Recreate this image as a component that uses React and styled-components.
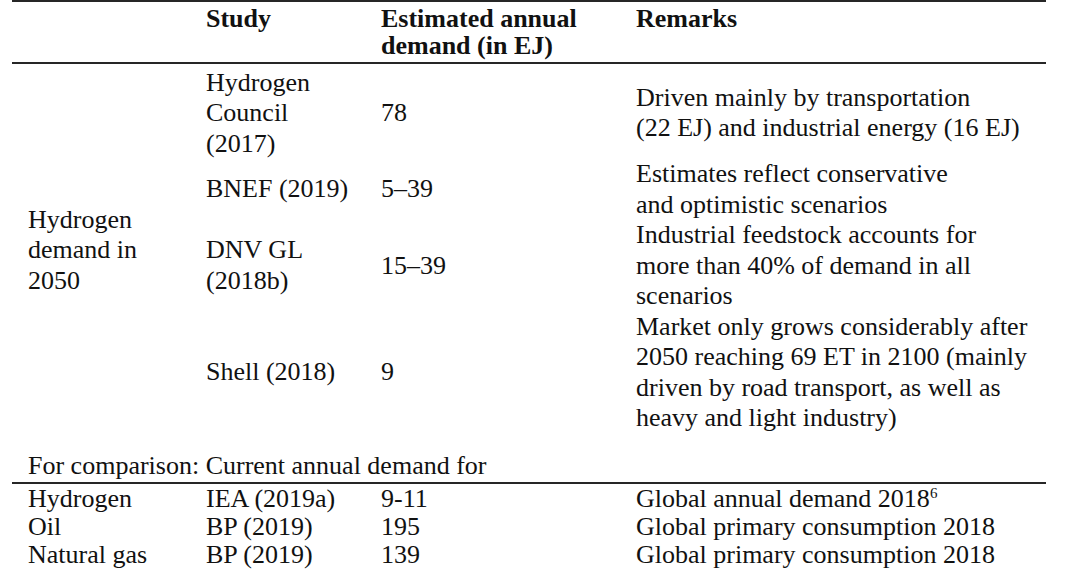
import React from "react";
import styled, { createGlobalStyle } from "styled-components";

const GlobalStyle = createGlobalStyle`
    html, body {
        margin: 0;
        padding: 0;
        background: #ffffff;
    }
    body {
        font-family: "Liberation Serif", "Times New Roman", serif;
        color: #111111;
    }
`;

const Page = styled.div`
    width: 1080px;
    height: 573px;
    overflow: hidden;
`;

const Table = styled.table`
    margin-left: 12px;
    width: 1034px;
    border-collapse: collapse;
    table-layout: fixed;
    font-family: "Liberation Serif", "Times New Roman", serif;
    font-size: 26px;
    line-height: 30.5px;
    color: #111111;
`;

const HeadCell = styled.th`
    padding: 3px 0 3px 16px;
    border-top: 2px solid #262626;
    border-bottom: 2px solid #262626;
    text-align: left;
    vertical-align: top;
    font-weight: bold;
    line-height: 27px;
    white-space: nowrap;
`;

const Cell = styled.td`
    padding: ${(p) => p.$top ?? 0}px 0 ${(p) => p.$bottom ?? 0}px 16px;
    vertical-align: middle;
    white-space: nowrap;
    line-height: ${(p) => (p.$dense ? "28px" : "inherit")};
    border-bottom: ${(p) => (p.$rule ? "2px solid #262626" : "none")};
`;

const Sup = styled.sup`
    font-size: 15px;
    line-height: 0;
    vertical-align: 9px;
`;

const lines = (text) =>
    text.split("\n").map((line, i) => (
        <React.Fragment key={i}>
            {i > 0 && <br />}
            {line}
        </React.Fragment>
    ));

const forecasts = [
    {
        study: "Hydrogen\nCouncil\n(2017)",
        value: "78",
        remark: "Driven mainly by transportation\n(22 EJ) and industrial energy (16 EJ)"
    },
    {
        study: "BNEF (2019)",
        value: "5–39",
        remark: "Estimates reflect conservative\nand optimistic scenarios"
    },
    {
        study: "DNV GL\n(2018b)",
        value: "15–39",
        remark: "Industrial feedstock accounts for\nmore than 40% of demand in all\nscenarios"
    },
    {
        study: "Shell (2018)",
        value: "9",
        remark:
            "Market only grows considerably after\n2050 reaching 69 ET in 2100 (mainly\ndriven by road transport, as well as\nheavy and light industry)"
    }
];

const current = [
    { carrier: "Hydrogen", study: "IEA (2019a)", value: "9-11", remark: "Global annual demand 2018", note: "6" },
    { carrier: "Oil", study: "BP (2019)", value: "195", remark: "Global primary consumption 2018" },
    { carrier: "Natural gas", study: "BP (2019)", value: "139", remark: "Global primary consumption 2018" }
];

const DemandTable = () => (
    <Table>
        <colgroup>
            <col style={{ width: 178 }} />
            <col style={{ width: 175 }} />
            <col style={{ width: 255 }} />
            <col style={{ width: 426 }} />
        </colgroup>
        <thead>
            <tr>
                <HeadCell />
                <HeadCell>Study</HeadCell>
                <HeadCell>{lines("Estimated annual\ndemand (in EJ)")}</HeadCell>
                <HeadCell>Remarks</HeadCell>
            </tr>
        </thead>
        <tbody>
            {forecasts.map((row, i) => (
                <tr key={row.study}>
                    {i === 0 && (
                        <Cell rowSpan={forecasts.length} $top={3}>
                            {lines("Hydrogen\ndemand in\n2050")}
                        </Cell>
                    )}
                    <Cell $top={i === 0 ? 3.5 : 0}>{lines(row.study)}</Cell>
                    <Cell $top={i === 0 ? 3.5 : 0}>{row.value}</Cell>
                    <Cell $top={i === 0 ? 3.5 : 0}>{lines(row.remark)}</Cell>
                </tr>
            ))}
            <tr>
                <Cell colSpan={3} $top={17.5} $rule>
                    For comparison: Current annual demand for
                </Cell>
                <Cell $top={17.5} $rule />
            </tr>
            {current.map((row, i) => {
                const top = i === 0 ? 1.5 : 0;
                return (
                    <tr key={row.carrier}>
                        <Cell $top={top} $dense>{row.carrier}</Cell>
                        <Cell $top={top} $dense>{row.study}</Cell>
                        <Cell $top={top} $dense>{row.value}</Cell>
                        <Cell $top={top} $dense>
                            {row.remark}
                            {row.note && <Sup>{row.note}</Sup>}
                        </Cell>
                    </tr>
                );
            })}
        </tbody>
    </Table>
);

export default function App() {
    return (
        <Page>
            <GlobalStyle />
            <DemandTable />
        </Page>
    );
}
